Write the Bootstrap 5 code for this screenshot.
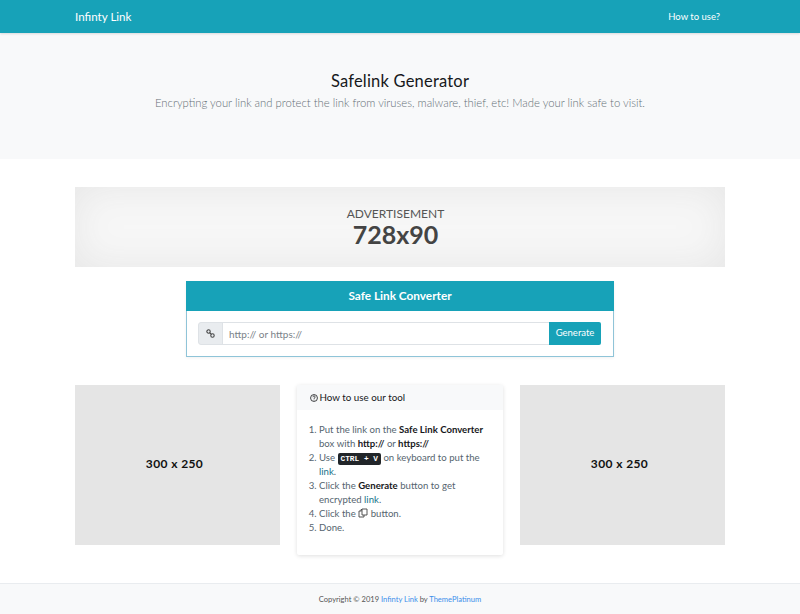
<!DOCTYPE html>
<html lang="en">
<head>
    <meta charset="UTF-8">
    <meta name="viewport" content="width=device-width, initial-scale=1, shrink-to-fit=no">
    <title>Infinty Link</title>
    <link href="https://cdn.jsdelivr.net/npm/bootstrap@5.3.0/dist/css/bootstrap.min.css" rel="stylesheet">
    <style>
        body { font-family: "Lato", "Open Sans", sans-serif; font-size: 10px; color: #56656f; }
        .wrap-main { width: 650px; margin: 0 auto; }
        .top-bar { background: #17a2b8; height: 33px; box-shadow: 0 1px 2px rgba(0,0,0,.12); position: relative; }
        .top-bar .brand { color: #fff; font-size: 11.6px; text-decoration: none; }
        .top-bar .how { color: #fff; font-size: 9.5px; text-decoration: none; margin-right: 5px; padding-top: 1px; }
        .hero { background: #f8f9fa; height: 126px; padding-top: 38px; text-align: center; }
        .hero h1 { font-size: 16.5px; font-weight: 400; color: #16181b; margin: 0 0 4px; line-height: 20px; letter-spacing: .2px; }
        .hero p { font-size: 11.3px; font-weight: 300; color: #667077; margin: 0; line-height: 16px; }
        .ad-top { height: 80px; margin-top: 28px; padding-right: 9px; background: #f7f7f7; box-shadow: inset 0 0 40px #e6e6e6; line-height: 1; }
        .ad-top .ad-lbl { font-size: 12px; font-weight: 400; color: #555; }
        .ad-top .ad-num { font-size: 25px; font-weight: 700; color: #444; margin-top: 2px; }
        .conv { width: 428px; margin: 14px auto 0; height: 76px; border: 1px solid #8fc4d8; box-shadow: 0 1px 3px rgba(0,0,0,.06); }
        .conv-head { background: #17a2b8; color: #fff; font-size: 11.8px; font-weight: 700; height: 30px; margin: -1px -1px 0; line-height: 30px; text-align: center; }
        .conv-body { padding: 11px 12px 0 11px; }
        .conv .input-group-text { background: #e9ecef; border-color: #dee2e6; width: 25px; height: 23px; padding: 0; justify-content: center; border-radius: 3px 0 0 3px; }
        .conv .form-control { height: 23px; min-height: 0; font-size: 10px; padding: 0 6px; color: #56656f; border-color: #dee2e6; }
        .conv .form-control::placeholder { color: #7a8288; }
        .conv .btn-go { background: #17a2b8; color: #fff; font-size: 9.5px; height: 23px; width: 52px; padding: 0; border: 0; border-radius: 0 2px 2px 0; }
        .lower { margin-top: 28px; display: grid; grid-template-columns: 205px 206px 205px; column-gap: 17px; align-items: start; }
        .ad-side { height: 160px; padding: 0 6px 2px 0; background: #e5e5e5; color: #111; font-size: 12px; font-weight: 700; letter-spacing: .4px; }
        .how-box { height: 170px; box-shadow: 0 1px 4px rgba(0,0,0,.13); border-radius: 2px; }
        .how-head { background: #f8f9fa; height: 25px; line-height: 25px; padding-left: 13px; color: #16181b; font-size: 9.8px; }
        .how-head svg { vertical-align: -1px; margin-right: -1px; }
        .how-box ol { margin: 13px 12px 0 0; padding-left: 22px; line-height: 14px; font-size: 9.6px; }
        .how-box b { color: #16181b; font-weight: 700; }
        .how-box a { color: #17748a; text-decoration: none; }
        .how-box kbd { background: #212529; color: #fff; font-size: 7.8px; line-height: 1; padding: 2px 3px; border-radius: 2px; font-weight: 700; font-family: "Liberation Mono", monospace; }
        .how-box svg.copy-ic { vertical-align: -1px; }
        .foot { margin-top: 28px; height: 31px; background: #f8f9fa; border-top: 1px solid #e9ecef; text-align: center; line-height: 31px; font-size: 7.55px; color: #555; }
        .foot a { color: #3b8eea; text-decoration: none; }
    </style>
</head>
<body>

<nav class="top-bar d-flex align-items-center">
    <div class="wrap-main d-flex justify-content-between align-items-center">
        <a class="brand" href="#">Infinty Link</a>
        <a class="how" href="#">How to use?</a>
    </div>
</nav>

<div class="hero">
    <h1>Safelink Generator</h1>
    <p>Encrypting your link and protect the link from viruses, malware, thief, etc! Made your link safe to visit.</p>
</div>

<div class="wrap-main">
    <div class="ad-top d-flex flex-column align-items-center justify-content-center">
        <div class="ad-lbl">ADVERTISEMENT</div>
        <div class="ad-num">728x90</div>
    </div>

    <div class="conv">
        <div class="conv-head">Safe Link Converter</div>
        <div class="conv-body">
            <div class="input-group flex-nowrap">
                <span class="input-group-text">
                    <svg width="9" height="9" viewBox="0 0 10 10" fill="none" stroke="#444" stroke-width="1.2"><circle cx="2.8" cy="2.8" r="1.9"/><circle cx="7.2" cy="7.2" r="1.9"/><path d="M4 4l2 2"/></svg>
                </span>
                <input type="text" class="form-control" placeholder="http:// or https://">
                <button class="btn btn-go" type="button">Generate</button>
            </div>
        </div>
    </div>

    <div class="lower">
        <div class="ad-side d-flex align-items-center justify-content-center">300 x 250</div>
        <div class="how-box bg-white">
            <div class="how-head">
                <svg width="8" height="8" viewBox="0 0 10 10" fill="none" stroke="#16181b" stroke-width="1"><circle cx="5" cy="5" r="4.3"/><path d="M3.6 4c0-2 2.9-1.8 2.9-.2 0 1.1-1.5 1.1-1.5 2.3M5 7.1v.8"/></svg>
                How to use our tool
            </div>
            <ol>
                <li>Put the link on the <b>Safe Link Converter</b> box with <b>http://</b> or <b>https://</b></li>
                <li>Use <kbd>CTRL + V</kbd> on keyboard to put the <a href="#">link</a>.</li>
                <li>Click the <b>Generate</b> button to get encrypted <a href="#">link</a>.</li>
                <li>Click the <svg class="copy-ic" width="10" height="10" viewBox="0 0 10 10" fill="none" stroke="#444" stroke-width=".9"><path d="M3 3V1.5h1M3.5 3H1v6h5V7M4 7V1h5v6z"/></svg> button.</li>
                <li>Done.</li>
            </ol>
        </div>
        <div class="ad-side d-flex align-items-center justify-content-center">300 x 250</div>
    </div>
</div>

<div class="foot">Copyright © 2019 <a href="#">Infinty Link</a> by <a href="#">ThemePlatinum</a></div>

<script src="https://cdn.jsdelivr.net/npm/bootstrap@5.3.0/dist/js/bootstrap.bundle.min.js"></script>
</body>

</html>
